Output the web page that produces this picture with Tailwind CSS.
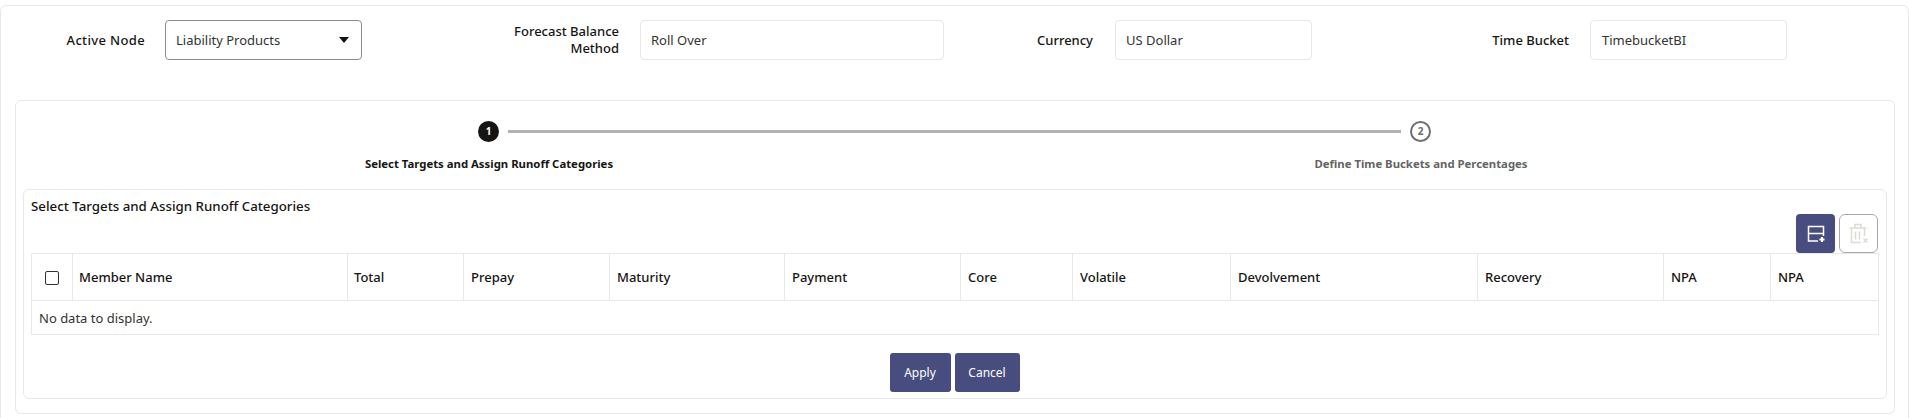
<!DOCTYPE html>
<html lang="en">
<head>
  <meta charset="UTF-8">
  <meta name="viewport" content="width=device-width, initial-scale=1.0">
  <title>Runoff Categories</title>
  <script src="https://cdn.jsdelivr.net/npm/@tailwindcss/browser@4"></script>
</head>
<body class="h-[418px] overflow-hidden bg-white pt-[5px] font-['Noto_Sans',sans-serif] text-[13px] text-[#161513]">

  <!-- Outer panel -->
  <div class="h-[430px] rounded-t-md border border-[#e8e8e8] pl-[14px] pr-[13px]">

    <!-- Filter row -->
    <div class="flex h-[94px] items-start pt-[14px]">
      <label class="ml-[51px] w-[79px] pt-[10px] text-right font-medium leading-[20px] tracking-[0.35px]">Active Node</label>
      <div class="ml-[20px] flex h-[40px] w-[197px] items-center justify-between rounded border border-[#8c8c8c] pl-[10px] pr-[12px] pt-[1px] text-[#333]">
        <span>Liability Products</span>
        <svg class="mb-[2px]" width="10" height="6" viewBox="0 0 10 6"><path d="M0 0h10L5 6z" fill="#161513"/></svg>
      </div>
      <label class="ml-[107px] mt-[3px] w-[150px] text-right font-medium leading-[17px]">Forecast Balance Method</label>
      <div class="ml-[21px] flex h-[40px] w-[304px] items-center rounded border border-[#e8e8e8] pl-[10px] pt-[1px] text-[#333]">Roll Over</div>
      <label class="ml-[89px] w-[60px] pt-[10px] text-right font-medium leading-[20px]">Currency</label>
      <div class="ml-[22px] flex h-[40px] w-[197px] items-center rounded border border-[#e8e8e8] pl-[10px] pt-[1px] text-[#333]">US Dollar</div>
      <label class="ml-[177px] w-[80px] pt-[10px] text-right font-medium leading-[20px]">Time Bucket</label>
      <div class="ml-[21px] flex h-[40px] w-[197px] items-center rounded border border-[#e8e8e8] pl-[11px] pt-[1px] text-[#333]">TimebucketBI</div>
    </div>

    <!-- Train card -->
    <div class="h-[314px] rounded-md border border-[#e8e8e8] px-[7px]">

      <!-- Steps -->
      <div class="relative h-[88px]">
        <div class="absolute left-[455px] top-[20px] flex items-center">
          <span class="flex h-[21px] w-[21px] items-center justify-center rounded-full bg-[#161513] text-[10px] font-bold text-white">1</span>
          <span class="ml-[9px] h-[3px] w-[893px] bg-[#b3b3b3]"></span>
          <span class="ml-[9px] flex h-[21px] w-[21px] items-center justify-center rounded-full border-2 border-[#6f6f6f] text-[10px] font-bold text-[#6f6f6f]">2</span>
        </div>
        <span class="absolute left-[341px] top-[54px] w-[250px] whitespace-nowrap text-center text-[11.35px] font-bold leading-[18px]">Select Targets and Assign Runoff Categories</span>
        <span class="absolute left-[1273px] top-[54px] w-[250px] whitespace-nowrap text-center text-[11.35px] font-bold leading-[18px] text-[#646464]">Define Time Buckets and Percentages</span>
      </div>

      <!-- Inner card -->
      <div class="h-[210px] rounded-md border border-[#e8e8e8] px-[7px]">
        <div class="pt-[6px] text-[13.3px] font-medium leading-[20px]">Select Targets and Assign Runoff Categories</div>

        <!-- Toolbar -->
        <div class="mt-[-2px] flex justify-end gap-[4px] pr-[1px]">
          <button class="flex h-[39px] w-[39px] items-center justify-center rounded bg-[#484d80]">
            <svg width="20" height="20" viewBox="0 0 20 20" fill="none" stroke="#fff" stroke-width="1.5">
              <path d="M12 17H2.5V2.5h15V12M2.5 9.5h15"/>
              <path d="M16 13v5M13.5 15.5h5" stroke-width="2"/>
            </svg>
          </button>
          <button class="flex h-[39px] w-[39px] items-center justify-center rounded-md border border-[#a9a9a9]">
            <svg width="20" height="22" viewBox="0 0 20 22" fill="none" stroke="#dcdcd6" stroke-width="1.6">
              <path d="M0.5 5h17M6 5V1.5h6V5M2.5 5v14.5h9.5M15.5 5v8M6.5 8.5v8M10.5 8.5v8"/>
              <path d="M14.5 15.5l4 4M18.5 15.5l-4 4" stroke-width="1.5"/>
            </svg>
          </button>
        </div>

        <!-- Table -->
        <table class="w-[1847px] table-fixed border-collapse border border-[#e8e8e8]">
          <colgroup>
            <col class="w-[41px]"><col class="w-[275px]"><col class="w-[116px]"><col class="w-[146px]"><col class="w-[175px]"><col class="w-[176px]"><col class="w-[112px]"><col class="w-[158px]"><col class="w-[247px]"><col class="w-[186px]"><col class="w-[107px]"><col class="w-[108px]">
          </colgroup>
          <thead>
            <tr class="h-[47px] text-left">
              <th class="border border-[#e8e8e8] pt-[1px] font-medium"><span class="mx-auto block h-[14px] w-[14px] rounded-[2px] border-[1.5px] border-[#333]"></span></th>
              <th class="border border-[#e8e8e8] pl-[6px] pt-[2px] font-medium">Member Name</th>
              <th class="border border-[#e8e8e8] pl-[6px] pt-[2px] font-medium">Total</th>
              <th class="border border-[#e8e8e8] pl-[7px] pt-[2px] font-medium">Prepay</th>
              <th class="border border-[#e8e8e8] pl-[7px] pt-[2px] font-medium">Maturity</th>
              <th class="border border-[#e8e8e8] pl-[7px] pt-[2px] font-medium">Payment</th>
              <th class="border border-[#e8e8e8] pl-[7px] pt-[2px] font-medium">Core</th>
              <th class="border border-[#e8e8e8] pl-[7px] pt-[2px] font-medium">Volatile</th>
              <th class="border border-[#e8e8e8] pl-[7px] pt-[2px] font-medium">Devolvement</th>
              <th class="border border-[#e8e8e8] pl-[7px] pt-[2px] font-medium">Recovery</th>
              <th class="border border-[#e8e8e8] pl-[7px] pt-[2px] font-medium">NPA</th>
              <th class="border border-[#e8e8e8] pl-[7px] pt-[2px] font-medium">NPA</th>
            </tr>
          </thead>
          <tbody>
            <tr class="h-[34px]"><td colspan="12" class="pl-[7px] pt-[2px] text-[#333]">No data to display.</td></tr>
          </tbody>
        </table>

        <!-- Actions -->
        <div class="mt-[18px] flex justify-center gap-[4px] pr-[1px] text-[12px] text-white">
          <button class="h-[39px] w-[61px] rounded-[3px] bg-[#484d80]">Apply</button>
          <button class="h-[39px] w-[65px] rounded-[3px] bg-[#484d80]">Cancel</button>
        </div>
      </div>
    </div>
  </div>
</body>
</html>
